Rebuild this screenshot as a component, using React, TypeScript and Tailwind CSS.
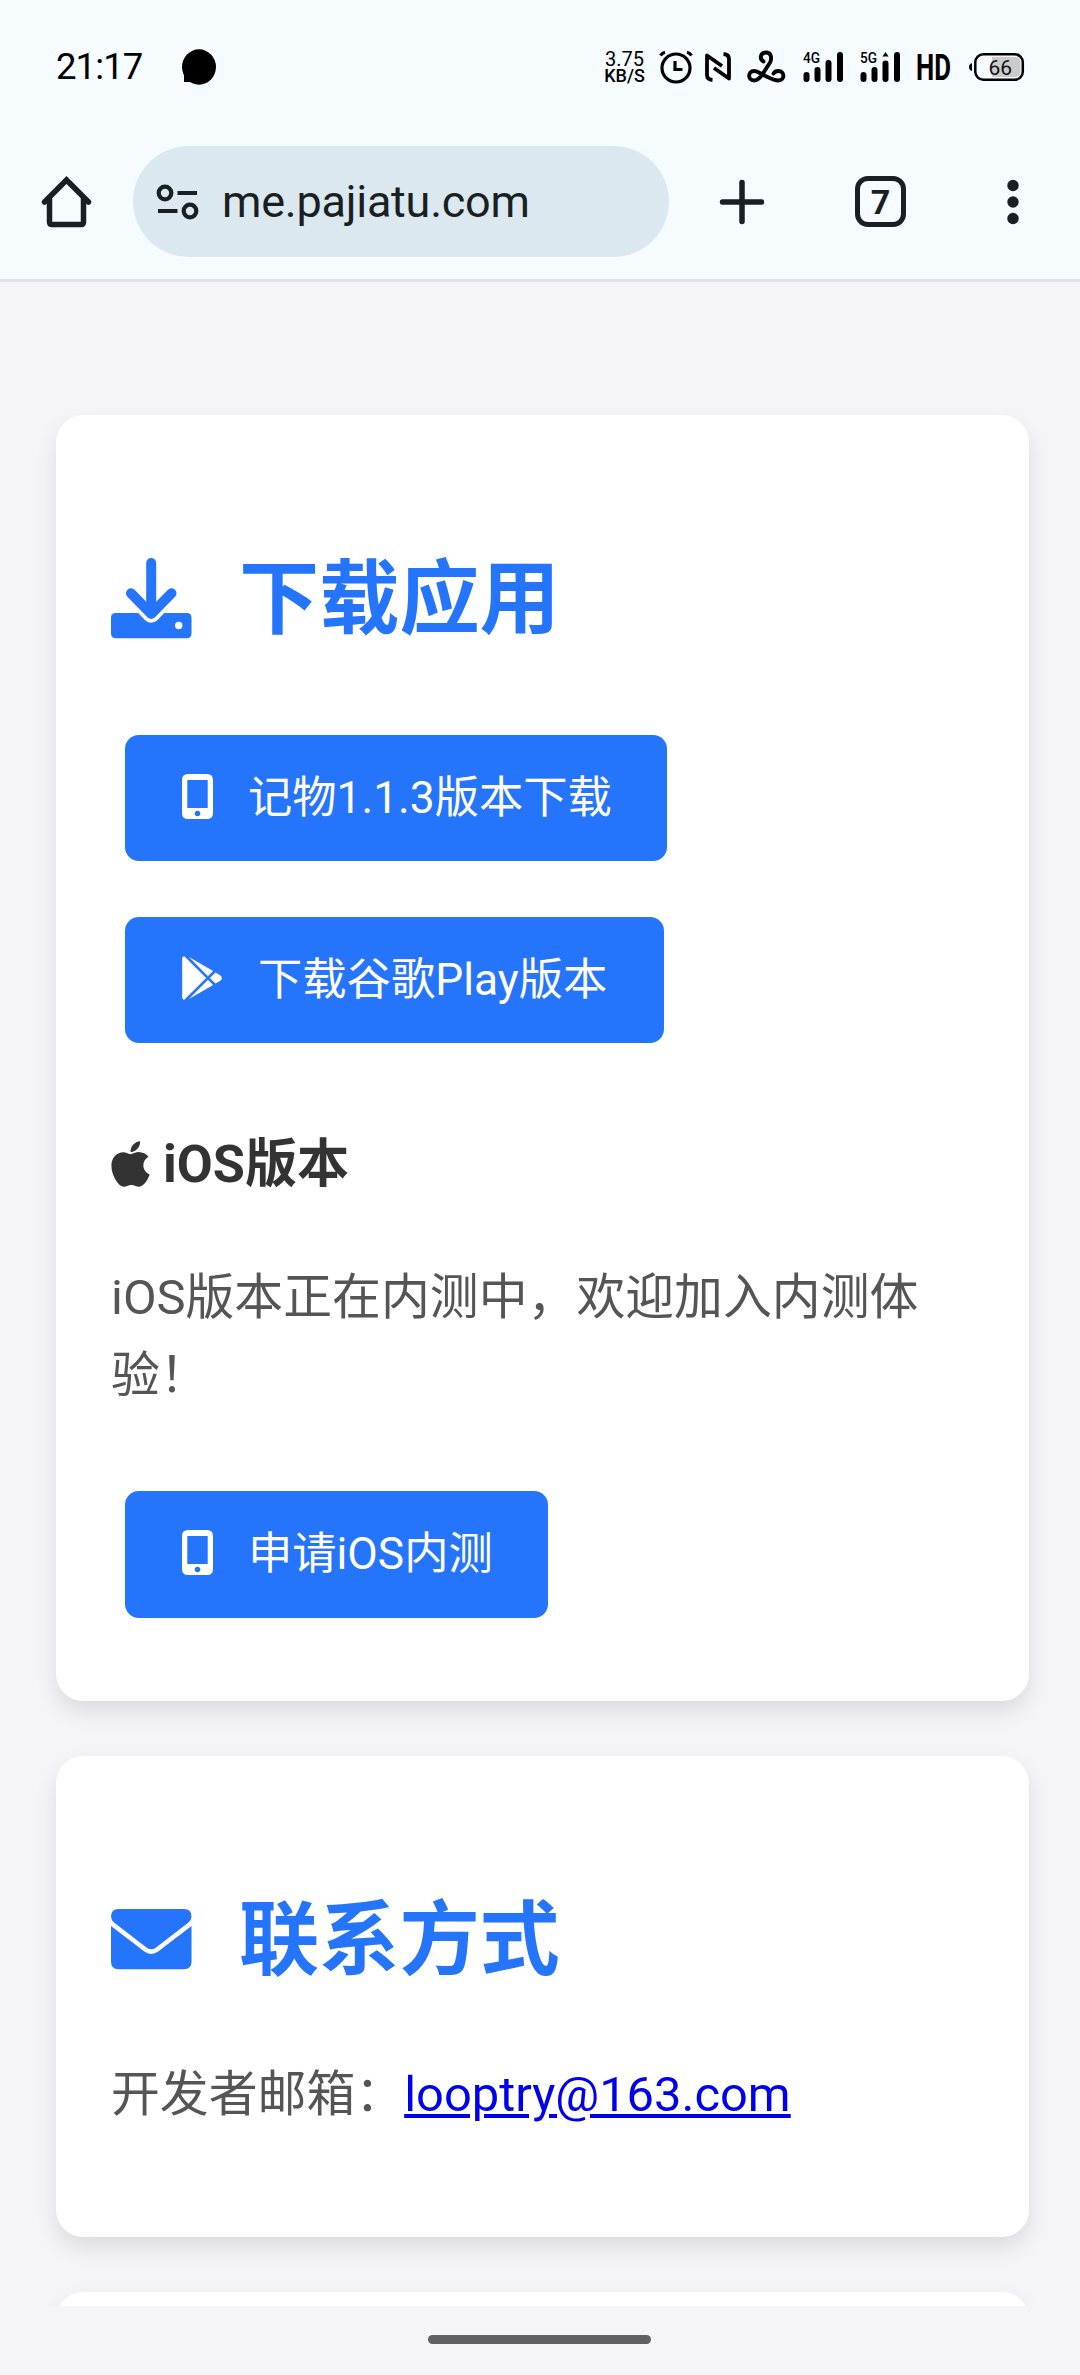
import React from 'react';
import { FaApple, FaGooglePlay } from 'react-icons/fa';

const StatusBar = () => (
  <div className="flex h-[133px] items-center justify-between pl-[56px] pr-[55px] text-black">
    <div className="flex items-center gap-[38px]">
      <span className="w-[87px] whitespace-nowrap text-[36.500px] leading-[40px] tracking-[-0.9px]">21:17</span>
      <svg width="36" height="36" viewBox="0 0 36 36">
        <ellipse cx="18" cy="18" rx="17" ry="17.7" />
        <path d="M3 20v13h12z" />
      </svg>
    </div>
    <div className="flex items-center">
      <div className="flex w-[43px] flex-col items-center">
        <span className="text-[20px] leading-[17px]">3.75</span>
        <span className="text-[18px] font-medium leading-[15px]">KB/S</span>
      </div>
      <svg className="ml-[13px]" width="34" height="34" viewBox="0 0 34 34" fill="none" stroke="black" strokeWidth="3.2">
        <circle cx="17" cy="18" r="14" />
        <path d="M16 11v8.5h7.5" />
        <path d="M1.5 5.5Q3 3 6 2.2M32.5 5.5Q31 3 28 2.2" />
      </svg>
      <svg className="ml-[11px]" width="28" height="32" viewBox="0 0 28 32" fill="none" stroke="black" strokeWidth="3.8" strokeLinejoin="round">
        <path d="M8.500 29Q3 28.500 3 24V4.500L18 15" />
        <path d="M19.500 3Q25 3.500 25 8V27.500L10 17" />
      </svg>
      <svg className="ml-[15px]" width="39" height="34" viewBox="0 0 39 34" fill="none" stroke="black" strokeWidth="3.900" strokeLinecap="round">
        <path d="M16.500 11.500C12 9 13.500 2.500 19 2.500C24.500 2.500 25 8.500 23 12.500L16 23.500C13 28 10.500 30.500 7 30.500C0.500 30.500 0.500 21 7 21C11 21 14.500 24.500 18.500 26C23.500 28.500 26.500 30.500 31.500 30.500C38 30.500 38 21 31.500 21Q28 21 26.500 23.500" />
      </svg>
      <SignalBars label="4G" className="ml-[17px]" />
      <SignalBars label="5G" className="ml-[16px]" arrow />
      <svg className="ml-[14px]" width="40" height="50" viewBox="0 0 40 50">
        <text x="1" y="37.500" fontFamily="Roboto" fontSize="36" fontWeight="700" textLength="35" lengthAdjust="spacingAndGlyphs">HD</text>
      </svg>
      <svg className="ml-[14px]" width="56" height="30" viewBox="0 0 56 30">
        <path d="M3 11v8Q0 18 0 15T3 11" />
        <rect x="6.300" y="2.300" width="47.500" height="25.500" rx="8" fill="#f6fbff" stroke="black" strokeWidth="2.500" />
        <path d="M23 5h23.500q5 0 5 5v10q0 5-5 5H23z" fill="#cbcbcd" />
        <text x="19.500" y="22.500" fontFamily="Roboto" fontSize="21" fill="#111">66</text>
      </svg>
    </div>
  </div>
);

const SignalBars = ({ label, className, arrow }: { label: string; className: string; arrow?: boolean }) => (
  <svg className={className} width="41" height="34" viewBox="0 0 41 34">
    <text x="0" y="13" fontFamily="Roboto" fontSize="14" fontWeight="500" textLength="17" lengthAdjust="spacingAndGlyphs">{label}</text>
    <rect x="0.500" y="22" width="6" height="10" rx="3" />
    <rect x="11.500" y="17" width="6" height="15" rx="3" />
    <rect x="22.500" y={arrow ? 10.5 : 10} width="6" height={arrow ? 21.5 : 22} rx="3" />
    {arrow && <path d="M25.500 2l3 4.500h-6z" />}
    <rect x="34" y="2" width="6" height="30" rx="3" />
  </svg>
);

const BrowserBar = () => (
  <div className="flex h-[149px] items-start border-b-[3px] border-[#dfe3e6] pt-[13px] text-[#191f22]">
    <div className="flex h-[111px] w-full items-center">
      <svg className="ml-[41px]" width="51" height="54" viewBox="0 0 51 54" fill="none" stroke="currentColor" strokeWidth="5.500" strokeLinecap="round" strokeLinejoin="round">
        <path d="M3.500 27L25.500 5L47.500 27" strokeLinejoin="miter" />
        <path d="M8.500 24V47q0 2.500 2.500 2.500H40q2.500 0 2.500-2.500V24" />
      </svg>
      <div className="ml-[41px] flex h-[111px] w-[536px] items-center rounded-full bg-[#dce8ef] pl-[23px]">
        <svg width="44" height="38" viewBox="0 0 44 38" fill="none" stroke="currentColor" strokeWidth="4.200">
          <circle cx="9" cy="10" r="6.300" />
          <path d="M21.500 10H41M2 28H21.500" />
          <circle cx="34" cy="28" r="6.300" />
        </svg>
        <span className="ml-[22px] whitespace-nowrap text-[45px] leading-[60px] tracking-[-0.25px]">me.pajiatu.com</span>
      </div>
      <svg className="ml-[50px]" width="46" height="46" viewBox="0 0 46 46" fill="none" stroke="currentColor" strokeWidth="5.500" strokeLinecap="round">
        <path d="M23 3.500V42.500M3.500 23H42.500" />
      </svg>
      <div className="ml-[90px] flex size-[51px] items-center justify-center rounded-[13px] border-[5px] border-[#191f22]">
        <span className="text-[34px] font-bold leading-[40px]">7</span>
      </div>
      <svg className="ml-[101px]" width="12" height="46" viewBox="0 0 12 46" fill="currentColor">
        <circle cx="6" cy="6.500" r="5.700" />
        <circle cx="6" cy="23" r="5.700" />
        <circle cx="6" cy="39.500" r="5.700" />
      </svg>
    </div>
  </div>
);

const PhoneIcon = () => (
  <svg width="31" height="45" viewBox="0 0 31 45">
    <path fillRule="evenodd" fill="currentColor" d="M6 0H25q6 0 6 6V39q0 6-6 6H6q-6 0-6-6V6Q0 0 6 0M5.300 6V34H25.700V6zM15.500 36.700a2.800 2.800 0 1 0 .01 0z" />
  </svg>
);

const DownloadIcon = () => (
  <svg width="81" height="81" viewBox="0 0 81 81" fill="none" strokeLinecap="round" strokeLinejoin="round">
    <rect x="0" y="55" width="80.500" height="25.200" rx="4.500" fill="#2575fc" />
    <path d="M20 35L40.200 56L60.500 35" stroke="white" strokeWidth="17.500" />
    <path d="M40.200 5V54M20 35.300L40.200 56L60.500 35.300" stroke="#2575fc" strokeWidth="10" />
    <circle cx="67.700" cy="67.500" r="3.700" fill="white" />
  </svg>
);

const MailIcon = () => (
  <svg width="81" height="61" viewBox="0 0 81 61" fill="#2575fc">
    <path d="M7.500 0H73Q80.500 0 80.500 7.500Q80.500 11 77.500 13.500L46 37.800Q40.200 42.800 34.500 37.800L3 13.500Q0 11 0 7.500Q0 0 7.500 0" />
    <path d="M0 17L33 42.300Q40.200 47.500 47.500 42.300L80.500 17V52.700Q80.500 60.200 73 60.200H7.500Q0 60.200 0 52.700z" />
  </svg>
);

interface CardProps {
  className: string;
  children?: React.ReactNode;
}

const Card = ({ className, children }: CardProps) => (
  <section className={`mx-[56px] w-[973px] shrink-0 rounded-[27px] bg-white px-[55px] shadow-[0_11px_22px_rgba(0,0,0,0.1)] ${className}`}>
    {children}
  </section>
);

const Title = ({ icon, children }: { icon: React.ReactNode; children: React.ReactNode }) => (
  <h2 className="flex h-[81px] items-center text-[80.200px] font-bold leading-[81px] text-[#2575fc]">
    <span className="flex w-[128px]">{icon}</span>
    <span className="pt-[4px]">{children}</span>
  </h2>
);

interface ButtonProps {
  icon: React.ReactNode;
  className: string;
  children: React.ReactNode;
}

const Button = ({ icon, className, children }: ButtonProps) => (
  <button className={`ml-[14px] flex h-[126px] items-center rounded-[14px] bg-[#2575fc] pb-[4px] text-[44.300px] leading-[60px] text-white whitespace-nowrap ${className}`}>
    {icon}
    <span className="pt-[3px]">{children}</span>
  </button>
);

const App = () => (
  <div className="flex h-[2375px] w-[1080px] flex-col overflow-hidden bg-[#f4f4f9] font-['Roboto','Noto_Sans_CJK_SC',sans-serif]">
    <header className="bg-[#f6fbff]">
      <StatusBar />
      <BrowserBar />
    </header>
    <main className="flex h-[2024px] flex-col gap-[55px] overflow-hidden pt-[133px]">
      <Card className="h-[1286px] pt-[143px]">
        <Title icon={<DownloadIcon />}>下载应用</Title>
        <Button className="mt-[96px] w-[542px] gap-[35px] pl-[57px]" icon={<PhoneIcon />}>记物1.1.3版本下载</Button>
        <Button className="mt-[56px] w-[539px] gap-[34px] pl-[55px]" icon={<FaGooglePlay className="size-[44px]" />}>下载谷歌Play版本</Button>
        <h3 className="mt-[86px] flex h-[72px] items-center text-[52.200px] font-bold leading-[72px] text-[#333]">
          <FaApple className="-mt-[2px] mr-[13px] h-[52px] w-[39px]" />
          iOS版本
        </h3>
        <p className="mt-[58px] text-[48.860px] leading-[77.800px] text-[#555]">
          iOS版本正在内测中，欢迎加入内测体验！
        </p>
        <Button className="mt-[76px] h-[127px] w-[423px] gap-[35px] pl-[57px]" icon={<PhoneIcon />}>申请iOS内测</Button>
      </Card>
      <Card className="h-[481px] pt-[143px]">
        <Title icon={<MailIcon />}>联系方式</Title>
        <p className="mt-[76px] text-[48.860px] leading-[77.800px] text-[#555]">
          开发者邮箱：<a className="text-[#0000ee] underline" href="mailto:looptry@163.com">looptry@163.com</a>
        </p>
      </Card>
      <Card className="h-[300px]" />
    </main>
    <footer className="flex h-[69px] justify-center pt-[29px] pr-[1px]">
      <div className="h-[9px] w-[223px] rounded-full bg-[#616164]" />
    </footer>
  </div>
);

export default App;
